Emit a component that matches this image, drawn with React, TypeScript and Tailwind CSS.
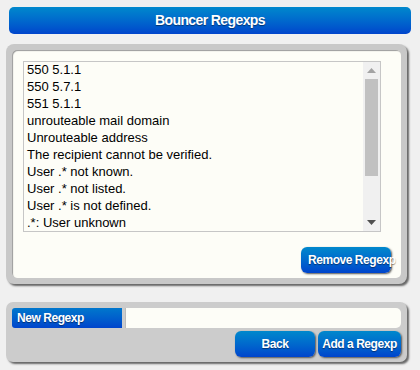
import React from "react";

const lines = [
  "550 5.1.1",
  "550 5.7.1",
  "551 5.1.1",
  "unrouteable mail domain",
  "Unrouteable address",
  "The recipient cannot be verified.",
  "User .* not known.",
  "User .* not listed.",
  "User .* is not defined.",
  ".*: User unknown",
];

export default function App() {
  return (
    <div
      className="w-[420px] h-[370px] bg-[#f0f0f0] overflow-hidden flex flex-col"
      style={{ fontFamily: '"Liberation Sans", Arial, sans-serif' }}
    >
      <div className="mt-[7px] mx-[9px] h-[27px] rounded-[5px] bg-gradient-to-b from-[#0088cc] to-[#0044cc] flex items-center justify-center text-white font-bold text-[14px] tracking-[-0.6px] [text-shadow:0_1px_1px_rgba(0,0,0,0.45)]">
        Bouncer Regexps
      </div>

      <div className="mt-[10px] ml-[6px] w-[401px] h-[240px] rounded-[8px] bg-[#c8c8c8] p-[6px] shadow-[2px_2px_2px_#666]">
        <div className="h-full rounded-[5px] bg-[#fdfdf7] shadow-[inset_1px_1px_1px_#9a9a9a] pt-[11px] pl-[11px] pr-[10px] flex flex-col">
          <div className="w-[358px] h-[171px] border border-[#c6c6c6] bg-[#fdfdf7] flex">
            <div className="flex-1 pl-[3px] -mt-px text-[13px] text-black overflow-hidden">
              {lines.map((l) => (
                <div key={l} className="h-[17px] leading-[17px] whitespace-nowrap">
                  {l}
                </div>
              ))}
            </div>
            <div className="w-[17px] bg-[#f0f0f0] flex flex-col items-center">
              <div className="h-[17px] w-full flex items-center justify-center">
                <svg width="9" height="5" viewBox="0 0 9 5">
                  <polygon points="0,5 9,5 4.5,0" fill="#a3a3a3" />
                </svg>
              </div>
              <div className="w-[13px] h-[97px] bg-[#c1c1c1]" />
              <div className="flex-1" />
              <div className="h-[17px] w-full flex items-center justify-center">
                <svg width="9" height="5" viewBox="0 0 9 5">
                  <polygon points="0,0 9,0 4.5,5" fill="#505050" />
                </svg>
              </div>
            </div>
          </div>
          <div className="flex justify-end mt-[15px]">
            <div className="w-[90px] h-[26px] rounded-[6px] bg-gradient-to-b from-[#0088cc] to-[#0044cc] shadow-[1px_1px_2px_#555] flex items-center pl-[7px] text-white font-bold text-[12px] tracking-[-0.45px] whitespace-nowrap [text-shadow:0_1px_1px_rgba(0,0,0,0.45)]">
              Remove Regexp
            </div>
          </div>
        </div>
      </div>

      <div className="mt-[18px] ml-[6px] w-[401px] h-[60px] rounded-[7px] bg-[#cccccc] p-[6px] shadow-[2px_2px_2px_#666] flex flex-col">
        <div className="flex h-[20px] gap-[3px]">
          <div className="w-[110px] h-[20px] rounded-l-[3px] bg-gradient-to-b from-[#0077cc] to-[#0044cc] flex items-center pl-[5px] text-white font-bold text-[12px] tracking-[-0.45px] [text-shadow:0_1px_1px_rgba(0,0,0,0.45)]">
            New Regexp
          </div>
          <div className="w-[277px] h-[20px] rounded-r-[5px] bg-[#fdfdf7] border-l border-[#bbbbbb]" />
        </div>
        <div className="flex justify-end gap-[3px] mt-[3px]">
          <div className="w-[80px] h-[26px] rounded-[6px] bg-gradient-to-b from-[#0088cc] to-[#0044cc] shadow-[1px_1px_2px_#555] flex items-center justify-center text-white font-bold text-[12px] tracking-[-0.45px] [text-shadow:0_1px_1px_rgba(0,0,0,0.45)]">
            Back
          </div>
          <div className="w-[83px] h-[26px] rounded-[6px] bg-gradient-to-b from-[#0088cc] to-[#0044cc] shadow-[1px_1px_2px_#555] flex items-center justify-center text-white font-bold text-[12px] tracking-[-0.45px] whitespace-nowrap [text-shadow:0_1px_1px_rgba(0,0,0,0.45)]">
            Add a Regexp
          </div>
        </div>
      </div>
    </div>
  );
}
